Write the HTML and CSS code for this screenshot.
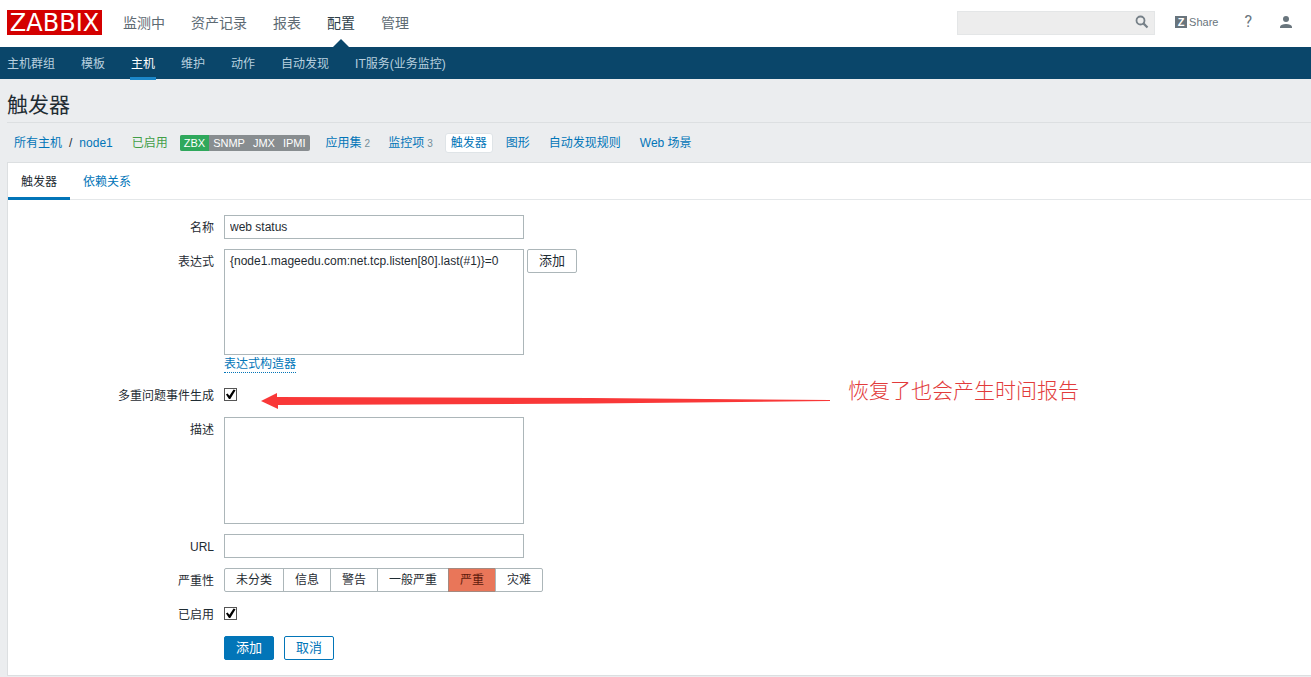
FILE: index.html
```html
<!DOCTYPE html>
<html lang="zh-CN">
<head>
<meta charset="utf-8">
<title>触发器</title>
<link rel="stylesheet" href="styles.css">
</head>
<body>
<header class="top">
  <a class="logo" href="#">ZABBIX</a>
  <nav class="main-nav">
    <a href="#">监测中</a>
    <a href="#">资产记录</a>
    <a href="#">报表</a>
    <a href="#" class="selected">配置</a>
    <a href="#">管理</a>
  </nav>
  <div class="tools">
    <form class="search" role="search">
      <input type="text" aria-label="搜索">
      <button type="button" aria-label="搜索">
        <svg width="14" height="14" viewBox="0 0 14 14"><circle cx="5.5" cy="5.5" r="4" fill="none" stroke="#768088" stroke-width="1.8"/><path d="M8.4 8.4L12.500 12.500" stroke="#768088" stroke-width="2.2"/></svg>
      </button>
    </form>
    <a class="share" href="#"><span class="share-mark">Z</span>Share</a>
    <a class="help" href="#">?</a>
    <a class="user" href="#" aria-label="用户">
      <svg width="12" height="12" viewBox="0 0 12 12"><circle cx="6" cy="3" r="3" fill="#69757d"/><path d="M0 12V10.500Q1 8 6 8T12 10.500V12Z" fill="#69757d"/></svg>
    </a>
  </div>
</header>
<nav class="sub-nav">
  <a href="#">主机群组</a>
  <a href="#">模板</a>
  <a href="#" class="selected">主机</a>
  <a href="#">维护</a>
  <a href="#">动作</a>
  <a href="#">自动发现</a>
  <a href="#">IT服务(业务监控)</a>
</nav>
<main>
  <h1>触发器</h1>
  <nav class="host-nav">
    <div class="crumbs"><a href="#">所有主机</a><span>/</span><a href="#">node1</a></div>
    <span class="enabled">已启用</span>
    <div class="badges"><span class="on">ZBX</span><span>SNMP</span><span>JMX</span><span>IPMI</span></div>
    <div class="links">
      <span><a href="#">应用集</a><sup>2</sup></span>
      <span><a href="#">监控项</a><sup>3</sup></span>
      <a href="#" class="current">触发器</a>
      <a href="#">图形</a>
      <a href="#">自动发现规则</a>
      <a href="#">Web 场景</a>
    </div>
  </nav>
  <section class="panel">
    <div class="tabs">
      <a href="#" class="selected">触发器</a>
      <a href="#">依赖关系</a>
    </div>
    <form class="form">
      <label for="name">名称</label>
      <div class="field"><input id="name" class="text" type="text" value="web status"></div>

      <label for="expr">表达式</label>
      <div class="field expression">
        <div class="line"><textarea id="expr" class="text area">{node1.mageedu.com:net.tcp.listen[80].last(#1)}=0</textarea><button type="button" class="btn grey">添加</button></div>
        <a class="builder" href="#">表达式构造器</a>
      </div>

      <label for="multi">多重问题事件生成</label>
      <div class="field check-row">
        <input id="multi" type="checkbox" checked>
        <div class="note">
          <svg width="570" height="16" viewBox="0 0 570 16"><path d="M0 8L16 0V4L330 5L569 7V8L330 10.500L17 12V16Z" fill="#f93838"/></svg>
          <p>恢复了也会产生时间报告</p>
        </div>
      </div>

      <label for="desc">描述</label>
      <div class="field"><textarea id="desc" class="text area"></textarea></div>

      <label for="url">URL</label>
      <div class="field"><input id="url" class="text" type="text"></div>

      <span class="label" id="sev">严重性</span>
      <div class="field severity" role="radiogroup" aria-labelledby="sev">
        <label><input type="radio" name="sev"><span>未分类</span></label>
        <label><input type="radio" name="sev"><span>信息</span></label>
        <label><input type="radio" name="sev"><span>警告</span></label>
        <label><input type="radio" name="sev"><span>一般严重</span></label>
        <label><input type="radio" name="sev" checked><span>严重</span></label>
        <label><input type="radio" name="sev"><span>灾难</span></label>
      </div>

      <label for="enabled">已启用</label>
      <div class="field check-row"><input id="enabled" type="checkbox" checked></div>

      <div class="field actions">
        <button type="button" class="btn primary">添加</button>
        <button type="button" class="btn">取消</button>
      </div>
    </form>
  </section>
</main>
</body>
</html>
```
FILE: styles.css
```css
* { box-sizing: border-box; }
body {
  margin: 0;
  background: #ebedef;
  color: #1f2c33;
  font: 12px/16px "Liberation Sans", "Noto Sans CJK SC", sans-serif;
}
a { color: #0275b8; text-decoration: none; }
button, input, textarea { font: inherit; color: inherit; margin: 0; }

.top {
  display: flex;
  align-items: flex-start;
  height: 47px;
  padding: 0 19px 0 7px;
  background: #fff;
}
.logo {
  width: 95px;
  height: 25px;
  margin-top: 10px;
  background: #d40000;
  color: #fff;
  font: 24px/27px "DejaVu Sans", sans-serif;
  text-align: center;
}
.main-nav {
  display: flex;
  gap: 26px;
  align-self: stretch;
  margin-left: 21px;
  font-size: 14px;
  line-height: 46px;
}
.main-nav a { position: relative; color: #5d6a73; }
.main-nav .selected { color: #2f3f4a; }
.main-nav .selected::after {
  content: "";
  position: absolute;
  left: 50%;
  bottom: 0;
  margin-left: -8px;
  border: 8px solid transparent;
  border-top: 0;
  border-bottom-color: #0a466a;
}
.tools {
  display: flex;
  align-items: center;
  margin-left: auto;
  height: 44px;
}
.tools a { color: #69757d; }
.search {
  display: flex;
  align-items: center;
  width: 198px;
  height: 24px;
  margin-top: 2px;
  background: #ededed;
  border: 1px solid #e4e6e7;
}
.search input {
  flex: 1;
  min-width: 0;
  border: 0;
  background: none;
}
.search button {
  display: flex;
  border: 0;
  padding: 0 5px 2px;
  background: none;
}
.share {
  display: flex;
  align-items: center;
  gap: 2px;
  margin-left: 20px;
  font-size: 11px;
}
.share-mark {
  width: 12px;
  height: 12px;
  background: #69757d;
  color: #fff;
  font-weight: bold;
  line-height: 12px;
  text-align: center;
}
.help { margin-left: 26px; font: 16px/16px Roboto, sans-serif; }
.user { display: flex; margin-left: 28px; }

.sub-nav {
  display: flex;
  gap: 24px;
  height: 32px;
  padding: 0 6px;
  background: #0a466a;
  line-height: 34px;
}
.sub-nav a { height: 33px; padding: 0 1px; color: #b8d0df; }
.sub-nav .selected { color: #fff; border-bottom: 3px solid #1b87c9; }

main { padding-left: 7px; }
h1 {
  margin: 0;
  height: 44px;
  border-bottom: 1px solid #dcdfe1;
  font-size: 21px;
  font-weight: normal;
  line-height: 52px;
}
.host-nav {
  display: flex;
  align-items: center;
  height: 39px;
  padding-left: 7px;
}
.crumbs { display: flex; gap: 7px; }
.enabled { margin-left: 19px; color: #429e47; }
.badges {
  display: flex;
  margin-left: 12px;
  border-radius: 2px;
  overflow: hidden;
  background: #888d90;
  color: #fff;
  font-size: 11px;
}
.badges span { padding: 0 4px; }
.badges .on { background: #2fa85c; }
.links { display: flex; align-items: center; gap: 7px; margin-left: 10px; }
.links a { display: inline-block; padding: 1px 5px; border: 1px solid transparent; }
.links sup { margin: 0 5px 0 -3px; color: #768d99; font-size: 10px; vertical-align: baseline; }
.links .current { border-color: #dfe4e7; border-radius: 3px; background: #fff; }

.panel {
  background: #fff;
  border: 1px solid #dcdfe1;
  border-right: 0;
}
.tabs {
  display: flex;
  height: 37px;
  border-bottom: 1px solid #e4e7e9;
  line-height: 38px;
}
.tabs a { height: 37px; padding: 0 13px; }
.tabs .selected { color: #1f2c33; border-bottom: 3px solid #0275b8; }

.form {
  display: grid;
  grid-template-columns: 206px 1fr;
  gap: 10px;
  padding: 15px 0;
}
.form > label, .label { height: 24px; line-height: 26px; text-align: right; }
.field { grid-column: 2; min-width: 0; }
.text {
  display: block;
  width: 300px;
  height: 24px;
  padding: 3px 5px;
  border: 1px solid #acb6b9;
  border-radius: 0;
  background: #fff;
}
.area { height: 106px; resize: none; }
#desc { height: 107px; }
.line { display: flex; align-items: flex-start; gap: 3px; }
.expression { height: 124px; }
.builder {
  display: inline-block;
  margin-top: 1px;
  border-bottom: 1px dotted #0275b8;
}
.check-row { position: relative; display: flex; align-items: center; height: 23px; }
input[type="checkbox"] {
  appearance: none;
  width: 13px;
  height: 13px;
  border: 1px solid #555;
  background: #fff;
}
input[type="checkbox"]:checked::after {
  content: "";
  display: block;
  width: 11px;
  height: 11px;
  background: #000;
  clip-path: polygon(9% 50%, 23% 40%, 40% 62%, 78% 5%, 96% 12%, 48% 91%, 36% 91%);
}
.note {
  position: absolute;
  left: 37px;
  top: -8px;
  display: flex;
  align-items: flex-end;
  gap: 17px;
  color: #e23b3b;
}
.note p {
  margin: 0 0 2px;
  font-size: 21px;
  font-weight: 300;
  line-height: 32px;
  white-space: nowrap;
}
.severity { display: flex; }
.severity input { position: absolute; opacity: 0; }
.severity span {
  display: block;
  height: 24px;
  margin-right: -1px;
  padding: 0 11px;
  border: 1px solid #acb6b9;
  line-height: 22px;
}
.severity label:first-child span { border-radius: 2px 0 0 2px; }
.severity label:last-child span { border-radius: 0 2px 2px 0; }
.severity input:checked + span { background: #e97659; color: #5f1a0b; border-color: #a5897f; }
.actions { display: flex; gap: 10px; }
.btn {
  height: 24px;
  padding: 0 11px;
  border: 1px solid #0275b8;
  border-radius: 2px;
  background: #fff;
  color: #0275b8;
  font-size: 13px;
  line-height: 22px;
}
.btn.grey { border-color: #acb6b9; color: #1f2c33; }
.btn.primary { background: #0275b8; color: #fff; }
```
